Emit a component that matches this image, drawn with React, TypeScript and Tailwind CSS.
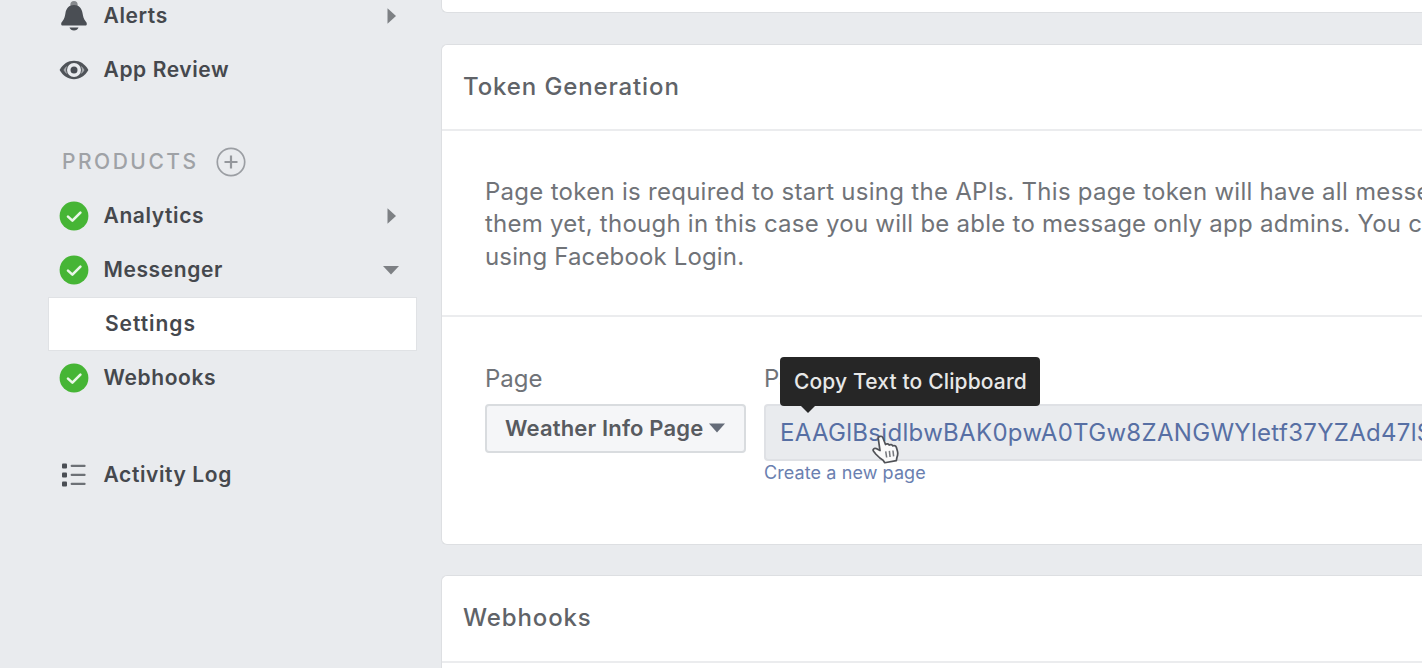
import type { ReactNode } from 'react';

function Check() {
  return (
    <svg width="30" height="30" viewBox="0 0 30 30">
      <circle cx="15" cy="15" r="14.4" fill="#46b535" />
      <path d="M9 15.6l4.4 4L21.4 11.6" fill="none" stroke="#eaf7e8" strokeWidth="2.6" strokeLinecap="round" strokeLinejoin="round" />
    </svg>
  );
}

function Bell() {
  return (
    <svg width="30" height="32" viewBox="0 0 30 32">
      <circle cx="15" cy="4.600" r="3.600" fill="#85888c" />
      <path d="M15 5c-5 0-7.800 3.400-8.600 8.400-.5 3.400-1.200 5.600-2.800 7.600-1.100 1.300-1.400 2-1.400 3.100 0 1 .6 1.500 1.500 1.500h22.600c.9 0 1.500-.5 1.500-1.500 0-1.100-.3-1.800-1.400-3.100-1.600-2-2.300-4.200-2.800-7.600C22.800 8.400 20 5 15 5z" fill="#4a4e54" />
      <path d="M10.500 27.600h9c-.7 1.900-2.300 3-4.500 3s-3.800-1.100-4.500-3z" fill="#4a4e54" />
    </svg>
  );
}

function Eye() {
  return (
    <svg width="30" height="20" viewBox="0 0 30 20">
      <path d="M.6 10C4 4 9 .8 15 .8S26 4 29.400 10C26 16 21 19.200 15 19.200S4 16 .6 10z" fill="#4f5358" />
      <circle cx="15" cy="10" r="7" fill="#e9ebee" />
      <path d="M4.500 10c1-1.800 2.300-3.200 3.900-4.200a8 8 0 000 8.400C6.800 13.200 5.500 11.800 4.500 10zM25.500 10c-1-1.800-2.300-3.200-3.900-4.200a8 8 0 010 8.400c1.600-1 2.900-2.400 3.900-4.200z" fill="#a5a8ac" />
      <circle cx="15" cy="10" r="3.500" fill="#4a4e54" />
    </svg>
  );
}

function ListIcon() {
  return (
    <svg width="24" height="24" viewBox="0 0 24 24">
      <g fill="#4a4e54">
        <rect x="0" y=".4" width="5" height="5" rx="1" />
        <rect x="0" y="9.400" width="5" height="5" rx="1" />
        <rect x="0" y="18.400" width="5" height="5" rx="1" />
      </g>
      <g fill="#6d7176">
        <rect x="8.600" y="1.700" width="15" height="2.400" rx="1" />
        <rect x="8.600" y="10.700" width="15" height="2.400" rx="1" />
        <rect x="8.600" y="19.700" width="15" height="2.400" rx="1" />
      </g>
    </svg>
  );
}

function Caret({ open }: { open?: boolean }) {
  return (
    <svg width="16" height="16" viewBox="0 0 16 16">
      <path d={open ? 'M0 4h16l-8 8.500z' : 'M4.500.3v15.400L13 8z'} fill="#7d8084" />
    </svg>
  );
}

function Row({ icon, label, caret }: { icon: ReactNode; label: string; caret?: 'open' | 'closed' }) {
  return (
    <div className="flex h-[54px] items-center pl-[59px] pr-[42px]">
      <span className="flex w-[30px] justify-center">{icon}</span>
      <span className="ml-[14.500px] flex-1 text-[21px] font-semibold tracking-[0.600px] text-[#45484d]">{label}</span>
      {caret && <Caret open={caret === 'open'} />}
    </div>
  );
}

function Pointer() {
  return (
    <svg width="28" height="30" viewBox="0 0 29 32" preserveAspectRatio="none" className="absolute left-[106px] top-[29px]">
      <path
        d="M8.300 1.500c1.300-.5 2.500.1 3 1.500l2.700 7.200c1-1.200 3.200-1 3.900.5 1.200-1 3.100-.5 3.700.9 1.500-.8 3.100.1 3.700 1.700l1.100 4.200c.6 2.500.2 4.500-.6 6.500l-.6 3.400-12 2.200-1.700-2.700c-2.600-1.400-5-3.800-7.400-6.400l-2.500-3.200c-1.300-1.700.6-3.700 2.700-2.800l4 2.100L6.600 4.600c-.6-1.500.3-2.700 1.700-3.100z"
        fill="#fafafa" stroke="#505257" strokeWidth="1.800" strokeLinejoin="round"
      />
      <path d="M14.200 17.500l1 6.500M18 17l.7 6.500M21.700 16.500l.7 6.300" stroke="#77797e" strokeWidth="1.600" />
    </svg>
  );
}

export default function App() {
  return (
    <div className="flex h-[668px] w-full overflow-hidden bg-[#e9ebee] font-[Inter,'Liberation_Sans',sans-serif]">
      <nav className="-mt-[11px] flex w-[441px] shrink-0 flex-col">
        <Row icon={<Bell />} label="Alerts" caret="closed" />
        <Row icon={<Eye />} label="App Review" />
        <div className="mt-[38px] flex h-[54px] items-center pl-[62px]">
          <span className="text-[21px] font-medium tracking-[2.500px] text-[#9fa2a6]">PRODUCTS</span>
          <svg width="30" height="30" viewBox="0 0 30 30" className="ml-[17px]">
            <circle cx="15" cy="15" r="13.700" fill="none" stroke="#9b9ea3" strokeWidth="1.700" />
            <path d="M15 8.500v13M8.500 15h13" stroke="#94979c" strokeWidth="2.200" />
          </svg>
        </div>
        <Row icon={<Check />} label="Analytics" caret="closed" />
        <Row icon={<Check />} label="Messenger" caret="open" />
        <div className="ml-[48px] mr-[24px] flex h-[54px] items-center border border-[#e0e2e5] bg-white pl-[56px] text-[21px] font-semibold tracking-[0.950px] text-[#45484d]">
          Settings
        </div>
        <Row icon={<Check />} label="Webhooks" />
        <div className="mt-[43px]">
          <Row icon={<ListIcon />} label="Activity Log" />
        </div>
      </nav>

      <main className="flex min-w-0 flex-1 flex-col">
        <div className="h-[13px] shrink-0 rounded-bl-md border-b border-l border-[#dddfe2] bg-white" />

        <section className="mt-[31px] h-[501px] shrink-0 rounded-l-md border-y border-l border-[#dddfe2] bg-white">
          <h2 className="flex h-[86px] items-center border-b-2 border-[#ebecee] pl-[21px] text-[24px] font-medium tracking-[0.880px] text-[#606368]">
            Token Generation
          </h2>
          <p className="h-[186px] border-b-2 border-[#ebecee] pl-[43px] pt-[44.500px] text-[24px] leading-[32.500px] text-[#707378]">
            <span className="block whitespace-nowrap tracking-[0.280px]">
              Page token is required to start using the APIs. This page token will have all messenger permissions
            </span>
            <span className="block whitespace-nowrap tracking-[0.250px]">
              them yet, though in this case you will be able to message only app admins. You can also generate
            </span>
            <span className="block whitespace-nowrap tracking-[0.150px]">using Facebook Login.</span>
          </p>
          <div className="flex pl-[43px] pt-[46px]">
            <div className="w-[261px] shrink-0">
              <div className="h-[41px] text-[24px] leading-[32px] text-[#707378]">Page</div>
              <button className="flex h-[49px] w-full items-center rounded-sm border-2 border-[#d9dcdf] bg-[#f5f6f8] pb-px pl-[18px] text-[22px] font-semibold tracking-[0.160px] text-[#585b60]">
                <span>Weather Info Page</span>
                <svg width="16" height="10" viewBox="0 0 16 10" className="ml-[6px]">
                  <path d="M0 .5h16l-8 9z" fill="#656c79" />
                </svg>
              </button>
            </div>
            <div className="ml-[18px] min-w-0 flex-1">
              <div className="h-[41px] text-[24px] leading-[32px] text-[#707378]">Page Access Token</div>
              <div className="relative h-[57px] rounded-l-sm border-y-2 border-l-2 border-[#dfe1e5] bg-[#e9ebee] pl-[14px] text-[24px] leading-[53px] text-[#576fa4]">
                <div className="overflow-hidden whitespace-nowrap tracking-[0.310px]">EAAGlBsidlbwBAK0pwA0TGw8ZANGWYletf37YZAd47lSZBq2ZC</div>
                <div className="absolute -top-[49px] left-[14px] flex h-[49px] w-[260px] items-center whitespace-nowrap rounded-sm bg-[#262626] pb-px pl-[14px] text-[21px] font-medium leading-none tracking-[0.140px] text-[#e8e8e8]">
                  Copy Text to Clipboard
                  <svg width="16" height="8" viewBox="0 0 16 8" className="absolute left-[20px] top-[48px]">
                    <path d="M0 0h16l-8 8z" fill="#262626" />
                  </svg>
                </div>
                <Pointer />
              </div>
              <div className="text-[18px] leading-[24px] tracking-[0.090px] text-[#6a80b0]">Create a new page</div>
            </div>
          </div>
        </section>

        <section className="mt-[30px] h-[140px] shrink-0 rounded-tl-md border-l border-t border-[#dddfe2] bg-white">
          <h2 className="flex h-[87px] items-center border-b-2 border-[#ebecee] pb-[2px] pl-[21px] text-[24px] font-medium tracking-[0.880px] text-[#606368]">
            Webhooks
          </h2>
        </section>
      </main>
    </div>
  );
}
